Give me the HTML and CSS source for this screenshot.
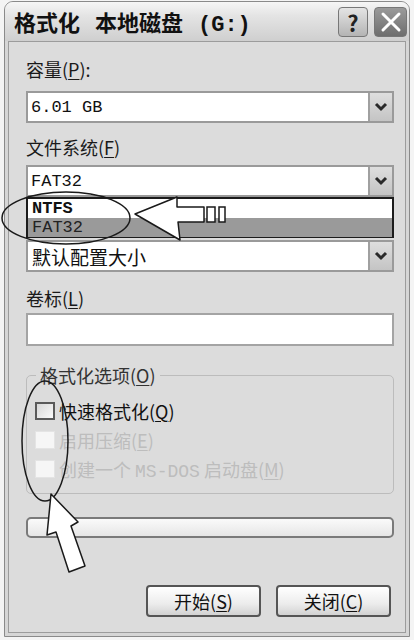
FILE: index.html
```html
<!DOCTYPE html>
<html lang="zh-CN">
<head>
<meta charset="utf-8">
<title>格式化 本地磁盘 (G:)</title>
<link rel="stylesheet" href="styles.css">
</head>
<body>
<div class="window">
  <div class="titlebar">
    <div class="title">格式化 本地磁盘 <span class="mono">(G:)</span></div>
    <div class="tbtns">
      <div class="tbtn help">?</div>
      <div class="tbtn close">
        <svg width="22" height="22" viewBox="0 0 22 22"><path d="M3 3 L19 19 M19 3 L3 19" stroke="#fff" stroke-width="3" stroke-linecap="round"/></svg>
      </div>
    </div>
  </div>
  <div class="client">
    <div class="label l1">容量(<u>P</u>):</div>
    <div class="combo c1"><span class="val mono">6.01 GB</span><span class="arrow"><svg width="14" height="10" viewBox="0 0 14 10"><path d="M2 2 L7 7 L12 2" stroke="#2a2a2a" stroke-width="3" fill="none"/></svg></span></div>
    <div class="label l2">文件系统(<u>F</u>)</div>
    <div class="combo c2"><span class="val mono">FAT32</span><span class="arrow"><svg width="14" height="10" viewBox="0 0 14 10"><path d="M2 2 L7 7 L12 2" stroke="#2a2a2a" stroke-width="3" fill="none"/></svg></span>
      <div class="dropdown">
        <div class="opt mono bold">NTFS</div>
        <div class="opt sel mono">FAT32</div>
      </div>
    </div>
    <div class="combo c3"><span class="val">默认配置大小</span><span class="arrow"><svg width="14" height="10" viewBox="0 0 14 10"><path d="M2 2 L7 7 L12 2" stroke="#2a2a2a" stroke-width="3" fill="none"/></svg></span></div>
    <div class="label l3">卷标(<u>L</u>)</div>
    <div class="input"></div>
    <div class="group">
      <div class="legend">格式化选项(<u>O</u>)</div>
      <div class="chk"><span class="box"></span><span>快速格式化(<u>Q</u>)</span></div>
      <div class="chk dis"><span class="box"></span><span>启用压缩(<u>E</u>)</span></div>
      <div class="chk dis"><span class="box"></span><span>创建一个 <span class="mono">MS-DOS</span> 启动盘(<u>M</u>)</span></div>
    </div>
    <div class="progress"></div>
    <div class="buttons">
      <div class="btn">开始(<u>S</u>)</div>
      <div class="btn">关闭(<u>C</u>)</div>
    </div>
  </div>
</div>
<svg class="annot" width="414" height="640" viewBox="0 0 414 640">
  <ellipse cx="66" cy="218" rx="64" ry="26" fill="none" stroke="#1a1a1a" stroke-width="1.5"/>
  <polygon points="135,214 177,197 177,207 204,207 204,222 178,222 180,240" fill="#fff" stroke="#1a1a1a" stroke-width="1.5" stroke-linejoin="round"/>
  <rect x="207" y="207" width="8" height="15" fill="#fff" stroke="#1a1a1a" stroke-width="1.5"/>
  <rect x="219" y="207" width="6" height="15" fill="#fff" stroke="#1a1a1a" stroke-width="1.5"/>
  <ellipse cx="45" cy="441" rx="23" ry="60" fill="none" stroke="#1a1a1a" stroke-width="1.5"/>
  <polygon points="51,494 78,522 71,526 85,566 69,572 56,532 47,535" fill="#fff" stroke="#1a1a1a" stroke-width="1.5" stroke-linejoin="round"/>
</svg>
</body>
</html>
```
FILE: styles.css
```css
html, body {
  margin: 0;
  padding: 0;
  background: #f4f4f4;
}
body {
  width: 414px;
  height: 640px;
  position: relative;
  overflow: hidden;
  font-family: "Noto Sans CJK SC", "Noto Sans", sans-serif;
  color: #1a1a1a;
}
.mono {
  font-family: "Liberation Mono", "Noto Sans CJK SC", monospace;
}
.bold { font-weight: bold; }
u { text-decoration-thickness: 1px; text-underline-offset: 2px; }

.window {
  margin: 1px 0 0 4px;
  width: 404px;
  border: 1px solid #8a8a8a;
  border-radius: 9px 9px 0 0;
  background: #d6d6d6;
}
.titlebar {
  height: 39px;
  border-radius: 8px 8px 0 0;
  background: linear-gradient(#f6f6f6, #e4e4e4 35%, #cfcfcf);
  display: flex;
  align-items: center;
  justify-content: space-between;
  padding: 0 2px 0 9px;
}
.title {
  font-size: 22px;
  font-weight: bold;
  word-spacing: 10px;
  color: #111;
  letter-spacing: 0;
}
.title .mono { font-weight: bold; word-spacing: 0; }
.tbtns { display: flex; gap: 6px; align-items: center; }
.tbtn {
  height: 30px;
  border-radius: 4px;
  border: 1px solid #777;
  display: flex;
  align-items: center;
  justify-content: center;
  box-sizing: border-box;
}
.help {
  width: 30px;
  background: linear-gradient(#e4e4e4, #b4b4b4);
  font-size: 22px;
  font-weight: bold;
  color: #222;
  line-height: 1;
}
.close {
  width: 33px;
  background: linear-gradient(#9a9a9a, #6e6e6e);
}

.client {
  margin: 0 3px 3px 3px;
  border: 1px solid #9c9c9c;
  background: #dcdcdc;
  padding: 15px 11px 15px 17px;
  display: flex;
  flex-direction: column;
}
.label {
  font-size: 18px;
  line-height: 24px;
  height: 24px;
  color: #1a1a1a;
}
.l2 { margin-top: 12px; }
.l3 { margin-top: 14px; }
.combo {
  position: relative;
  height: 32px;
  box-sizing: border-box;
  border: 2px solid #9a9a9a;
  background: #fff;
  display: flex;
  align-items: center;
  justify-content: space-between;
}
.c1 { margin-top: 10px; }
.c2 { margin-top: 6px; }
.c3 { margin-top: 43px; }
.val {
  font-size: 17px;
  padding-left: 3px;
  color: #111;
}
.c3 .val { font-size: 19px; padding-left: 4px; }
.arrow {
  width: 24px;
  height: 28px;
  box-sizing: border-box;
  border-left: 2px solid #a0a0a0;
  background: linear-gradient(#dedede, #c4c4c4);
  display: flex;
  align-items: center;
  justify-content: center;
}
.dropdown {
  position: absolute;
  left: -2px;
  right: -2px;
  top: 30px;
  height: 41px;
  box-sizing: border-box;
  border: 2px solid #1c1c1c;
  background: #fff;
  display: flex;
  flex-direction: column;
  z-index: 2;
}
.opt {
  height: 19px;
  line-height: 19px;
  font-size: 17px;
  padding-left: 4px;
  color: #111;
}
.opt.sel {
  flex: 1;
  background: #9a9a9a;
  color: #222;
}
.input {
  margin-top: 3px;
  height: 33px;
  box-sizing: border-box;
  border: 2px solid #a4a4a4;
  background: #fff;
}
.group {
  margin-top: 29px;
  height: 119px;
  box-sizing: border-box;
  border: 1px solid #bcbcbc;
  border-radius: 5px;
  padding: 0 8px 0 8px;
}
.legend {
  width: max-content;
  margin: -13px 0 0 1px;
  padding: 0 4px;
  background: #dcdcdc;
  font-size: 18px;
  line-height: 24px;
  color: #333;
}
.chk {
  height: 29px;
  display: flex;
  align-items: center;
  gap: 4px;
  font-size: 18px;
  color: #111;
}
.legend + .chk { margin-top: 9px; }
.box {
  width: 20px;
  height: 18px;
  box-sizing: border-box;
  border: 2px solid #5a5a5a;
  background: linear-gradient(135deg, #d8d8d8, #fafafa);
}
.dis { color: #bdbdbd; }
.dis .box {
  border: 1px solid #e4e4e4;
  background: #f6f6f6;
}
.progress {
  margin-top: 23px;
  height: 21px;
  box-sizing: border-box;
  border: 2px solid #7a7a7a;
  border-radius: 5px;
  background: linear-gradient(#fafafa, #e6e6e6);
}
.buttons {
  margin-top: 47px;
  display: flex;
  justify-content: flex-end;
  gap: 15px;
  padding-right: 3px;
}
.btn {
  width: 115px;
  height: 32px;
  box-sizing: border-box;
  border: 2px solid #555;
  border-radius: 4px;
  background: linear-gradient(#ffffff, #ececec 60%, #d2d2d2);
  font-size: 18px;
  line-height: 28px;
  text-align: center;
  color: #111;
}
.annot {
  position: absolute;
  left: 0;
  top: 0;
  z-index: 5;
  pointer-events: none;
}
```
